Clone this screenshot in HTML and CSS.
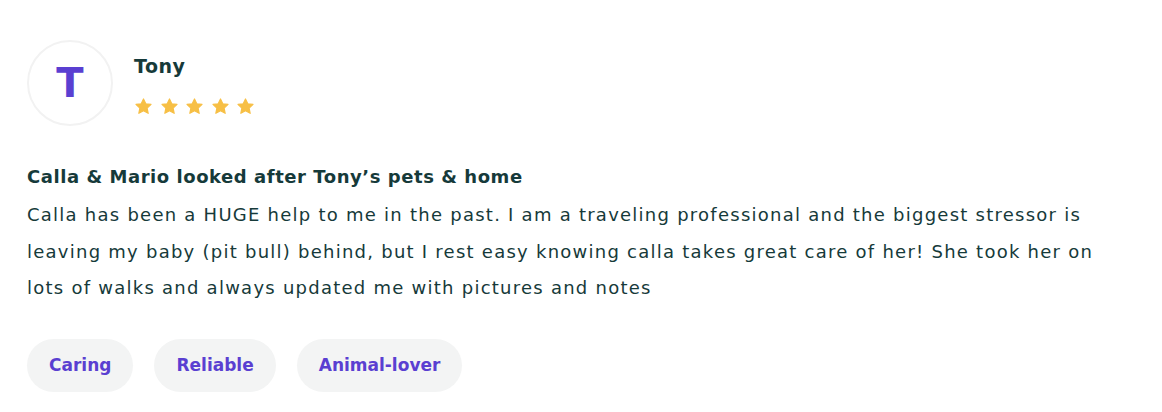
FILE: index.html
```
<!DOCTYPE html>
<html>
<head>
<meta charset="utf-8">
<link rel="stylesheet" href="styles.css">
</head>
<body>
<div class="review">
  <div class="header">
    <div class="avatar">T</div>
    <div class="meta">
      <div class="name">Tony</div>
      <div class="stars">
        <svg viewBox="0 0 24 24" class="star"><path d="M12 2.5l2.9 6.1 6.6.8-4.9 4.6 1.3 6.6L12 17.3l-5.9 3.3 1.3-6.6-4.9-4.6 6.6-.8z" stroke-linejoin="round"/></svg>
        <svg viewBox="0 0 24 24" class="star"><path d="M12 2.5l2.9 6.1 6.6.8-4.9 4.6 1.3 6.6L12 17.3l-5.9 3.3 1.3-6.6-4.9-4.6 6.6-.8z" stroke-linejoin="round"/></svg>
        <svg viewBox="0 0 24 24" class="star"><path d="M12 2.5l2.9 6.1 6.6.8-4.9 4.6 1.3 6.6L12 17.3l-5.9 3.3 1.3-6.6-4.9-4.6 6.6-.8z" stroke-linejoin="round"/></svg>
        <svg viewBox="0 0 24 24" class="star"><path d="M12 2.5l2.9 6.1 6.6.8-4.9 4.6 1.3 6.6L12 17.3l-5.9 3.3 1.3-6.6-4.9-4.6 6.6-.8z" stroke-linejoin="round"/></svg>
        <svg viewBox="0 0 24 24" class="star"><path d="M12 2.5l2.9 6.1 6.6.8-4.9 4.6 1.3 6.6L12 17.3l-5.9 3.3 1.3-6.6-4.9-4.6 6.6-.8z" stroke-linejoin="round"/></svg>
      </div>
    </div>
  </div>
  <div class="title">Calla &amp; Mario looked after Tony’s pets &amp; home</div>
  <p class="body">Calla has been a HUGE help to me in the past. I am a traveling professional and the biggest stressor is<br>leaving my baby (pit bull) behind, but I rest easy knowing calla takes great care of her! She took her on<br>lots of walks and always updated me with pictures and notes</p>
  <div class="tags">
    <span class="tag">Caring</span>
    <span class="tag">Reliable</span>
    <span class="tag">Animal-lover</span>
  </div>
</div>
</body>
</html>
```
FILE: styles.css
```
* { box-sizing: border-box; }
body {
  margin: 0;
  background: #fff;
  font-family: "DejaVu Sans", "Liberation Sans", sans-serif;
  color: #163a3a;
}
.review {
  padding: 40px 27px 0 27px;
  width: 1162px;
}
.header {
  display: flex;
  align-items: flex-start;
  gap: 21px;
}
.avatar {
  width: 86px;
  height: 86px;
  border-radius: 50%;
  border: 2px solid #f2f2f2;
  display: flex;
  align-items: center;
  justify-content: center;
  color: #5a3fd1;
  font-weight: 700;
  font-size: 40px;
  line-height: 1;
}
.meta {
  padding-top: 12px;
}
.name {
  font-size: 19px;
  font-weight: 600;
  line-height: 28px;
  letter-spacing: 0.5px;
}
.stars {
  display: flex;
  gap: 6.5px;
  margin-top: 17px;
}
.star {
  width: 19px;
  height: 19px;
  fill: #f7bf45;
  stroke: #f7bf45;
  stroke-width: 1.5;
}
.title {
  margin-top: 38px;
  font-size: 18px;
  font-weight: 700;
  line-height: 26px;
  letter-spacing: 0.55px;
}
.body {
  margin: 7px 0 0 0;
  font-size: 18px;
  line-height: 36.5px;
  letter-spacing: 1.25px;
  white-space: nowrap;
}
.tags {
  display: flex;
  gap: 21px;
  margin-top: 32px;
}
.tag {
  height: 53px;
  padding: 0 22px;
  border-radius: 27px;
  background: #f3f4f4;
  color: #5a3fd1;
  font-weight: 600;
  font-size: 17px;
  display: flex;
  align-items: center;
}
```
